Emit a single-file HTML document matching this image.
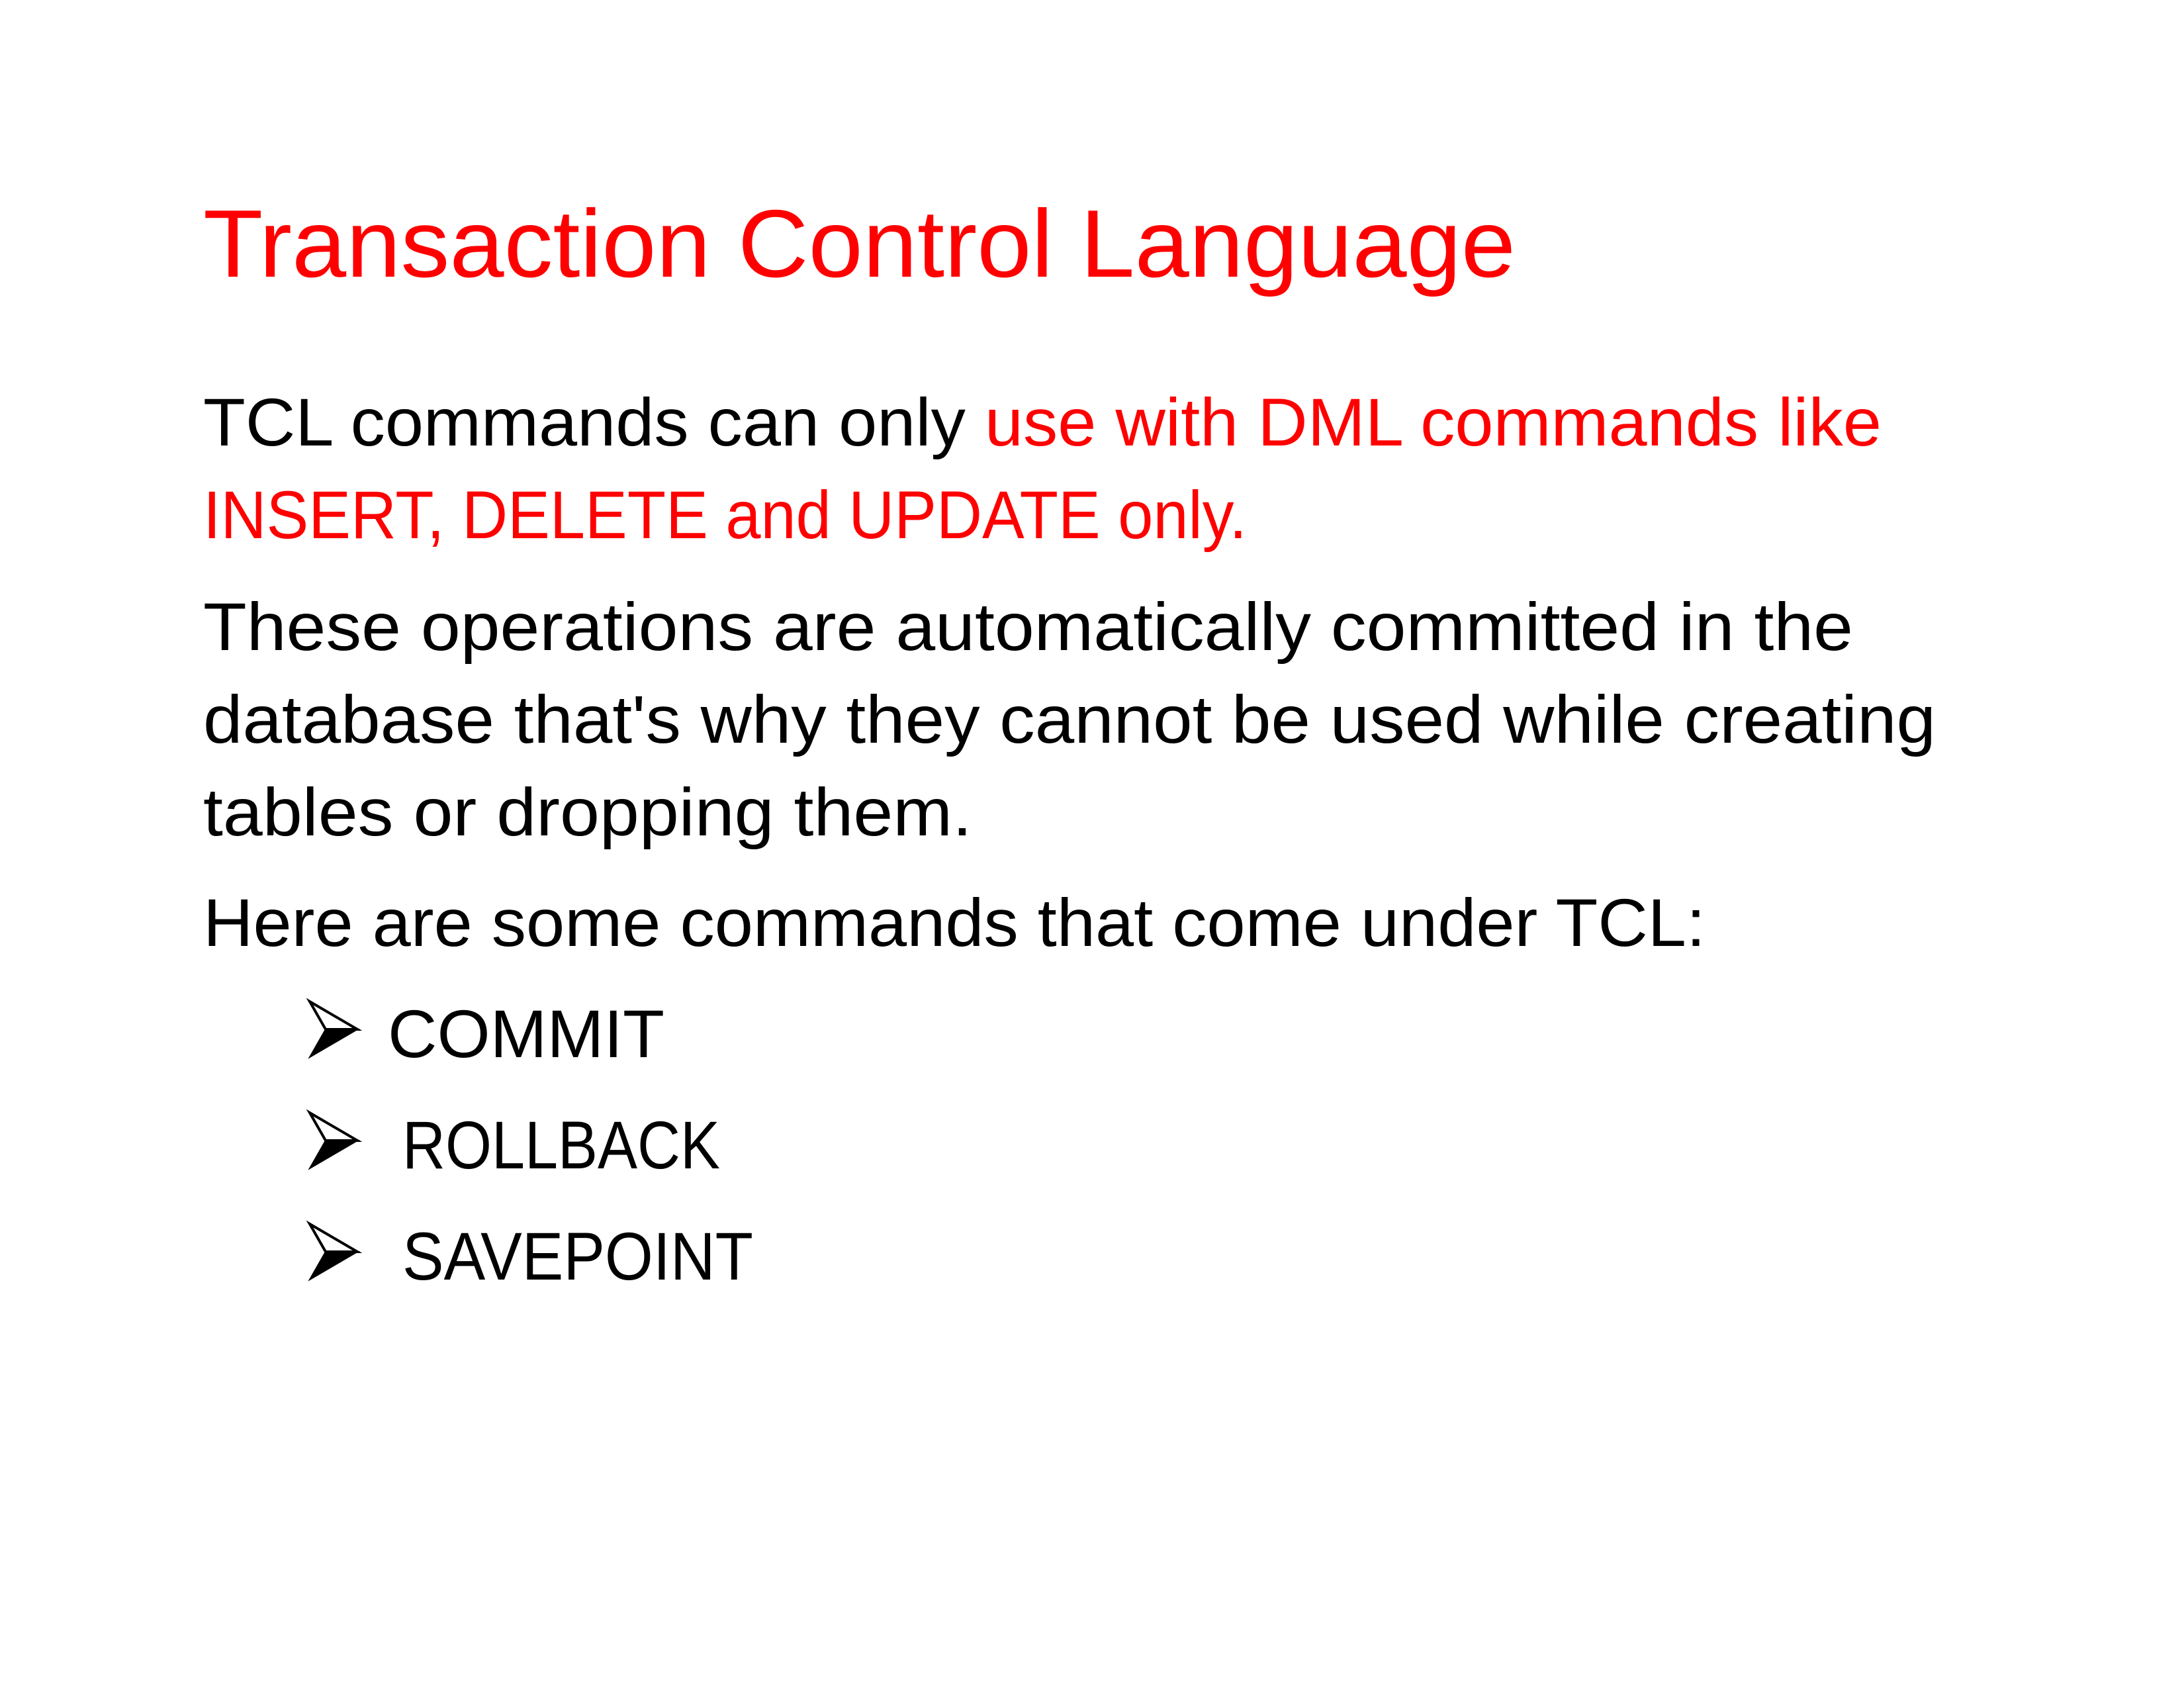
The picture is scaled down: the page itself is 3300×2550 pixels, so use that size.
<!DOCTYPE html>
<html><head><meta charset="utf-8"><style>html,body{margin:0;padding:0;background:#fff}svg{display:block}</style></head>
<body>
<svg width="3300" height="2550" viewBox="0 0 3300 2550" xmlns="http://www.w3.org/2000/svg" font-family="Liberation Sans, sans-serif">
<rect width="3300" height="2550" fill="#fff"/>
<text x="307" y="418" font-size="145" fill="#ff0000" textLength="1983" lengthAdjust="spacingAndGlyphs">Transaction Control Language</text>
<g font-size="102">
<text x="307" y="673" textLength="2536" lengthAdjust="spacingAndGlyphs"><tspan fill="#000">TCL commands can only </tspan><tspan fill="#ff0000">use with DML commands like</tspan></text>
<text x="307" y="813" fill="#ff0000" textLength="1577" lengthAdjust="spacingAndGlyphs">INSERT, DELETE and UPDATE only.</text>
<text x="307" y="982" textLength="2493" lengthAdjust="spacingAndGlyphs">These operations are automatically committed in the</text>
<text x="307" y="1122" textLength="2618" lengthAdjust="spacingAndGlyphs">database that's why they cannot be used while creating</text>
<text x="307" y="1262" textLength="1162" lengthAdjust="spacingAndGlyphs">tables or dropping them.</text>
<text x="307" y="1429" textLength="2270" lengthAdjust="spacingAndGlyphs">Here are some commands that come under TCL:</text>
<text x="586" y="1597" textLength="418" lengthAdjust="spacingAndGlyphs">COMMIT</text>
<text x="608" y="1765" textLength="480" lengthAdjust="spacingAndGlyphs">ROLLBACK</text>
<text x="608" y="1933" textLength="530" lengthAdjust="spacingAndGlyphs">SAVEPOINT</text>
</g>
<g id="a">
<path d="M468 1513 L540 1555 L492 1555 Z" fill="#fff" stroke="#000" stroke-width="4" stroke-linejoin="miter"/>
<path d="M468 1597 L540 1555 L492 1555 Z" fill="#000" stroke="#000" stroke-width="2"/>
</g>
<use href="#a" y="168"/>
<use href="#a" y="336"/>
</svg>
</body></html>
